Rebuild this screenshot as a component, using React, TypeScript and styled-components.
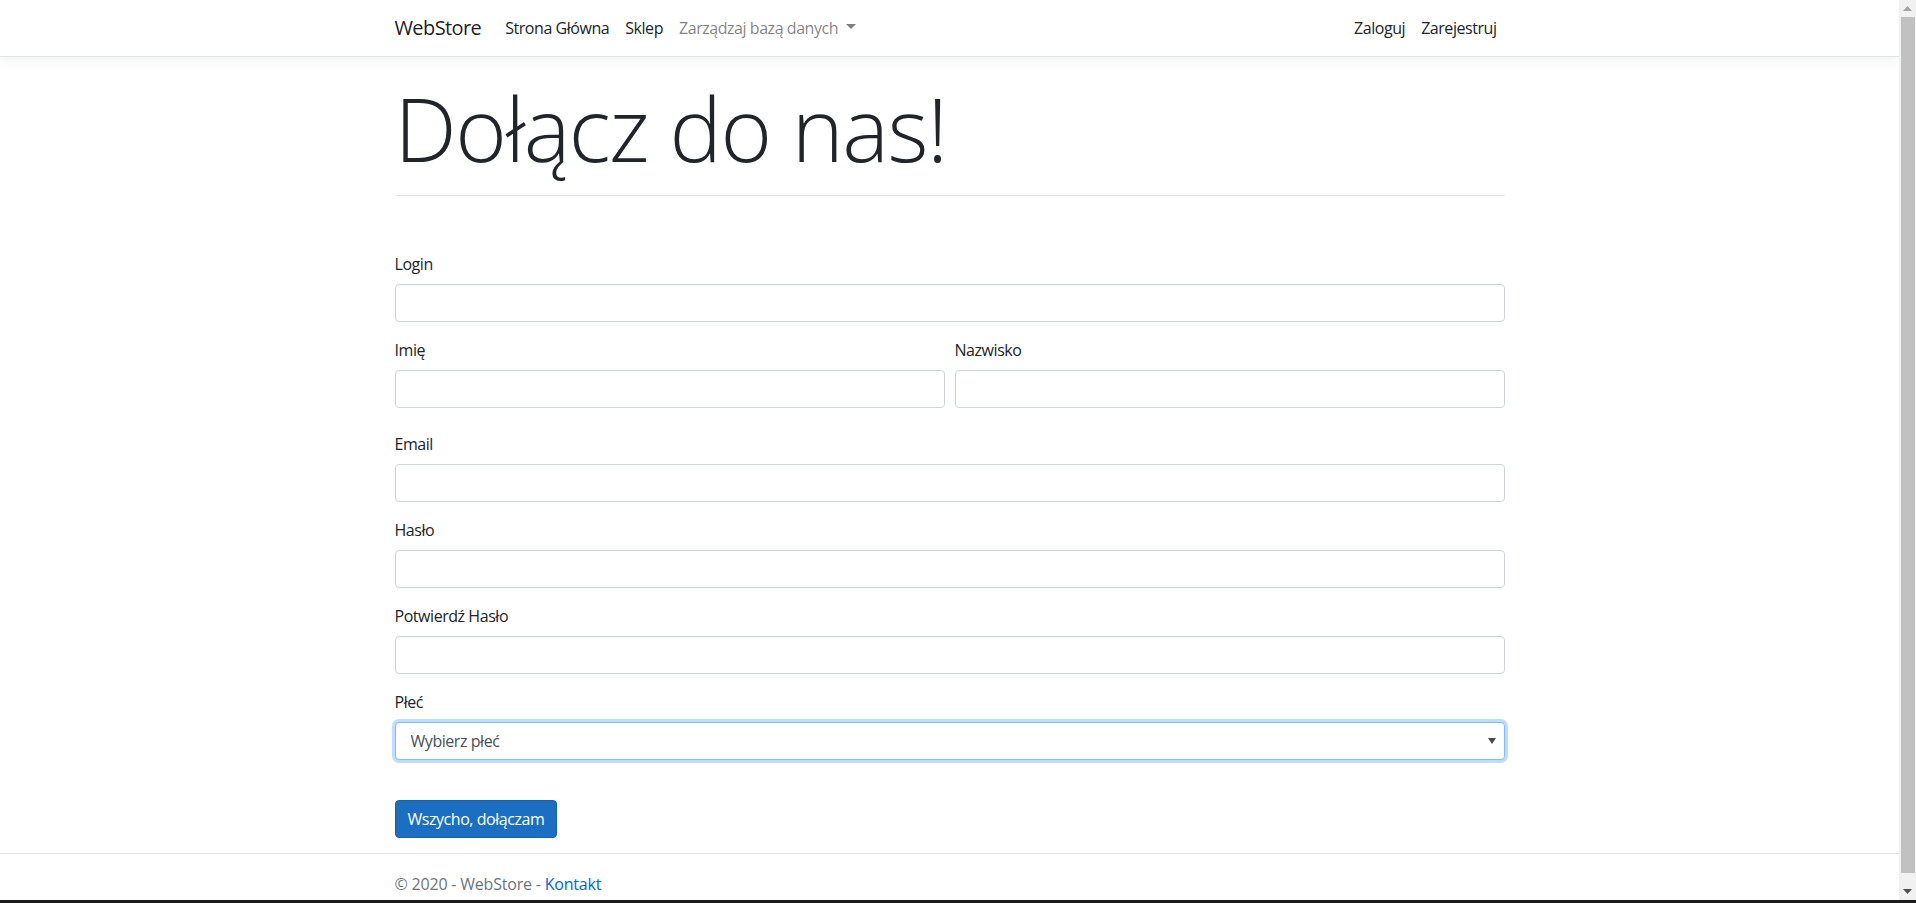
import React from "react";
import styled, { createGlobalStyle } from "styled-components";

const GlobalStyle = createGlobalStyle`
  html, body {
    margin: 0;
    padding: 0;
    overflow: hidden;
    background: #ffffff;
  }
  * {
    box-sizing: border-box;
  }
  body {
    font-family: "Segoe UI", "Open Sans", "Noto Sans", sans-serif;
    font-size: 16px;
    line-height: 1.5;
    letter-spacing: -0.45px;
    color: #212529;
  }
`;

type Field = { id: string; label: string; type?: string };

const topFields: Field[] = [{ id: "login", label: "Login" }];
const nameFields: Field[] = [
  { id: "imie", label: "Imię" },
  { id: "nazwisko", label: "Nazwisko" },
];
const bottomFields: Field[] = [
  { id: "email", label: "Email", type: "email" },
  { id: "haslo", label: "Hasło", type: "password" },
  { id: "potwierdz", label: "Potwierdź Hasło", type: "password" },
];

export default function App() {
  return (
    <Screen>
      <GlobalStyle />
      <Viewport>
        <Page>
          <Navbar>
            <NavContainer>
              <Brand href="#">WebStore</Brand>
              <NavList>
                <NavLink href="#">Strona Główna</NavLink>
                <NavLink href="#">Sklep</NavLink>
                <NavLink href="#" $muted>
                  Zarządzaj bazą danych
                  <Caret />
                </NavLink>
              </NavList>
              <NavListRight>
                <NavLink href="#">Zaloguj</NavLink>
                <NavLink href="#">Zarejestruj</NavLink>
              </NavListRight>
            </NavContainer>
          </Navbar>

          <Main>
            <Title>Dołącz do nas!</Title>
            <Divider />

            <form onSubmit={(e) => e.preventDefault()}>
              {topFields.map((f) => (
                <FormGroup key={f.id}>
                  <Label htmlFor={f.id}>{f.label}</Label>
                  <Input id={f.id} type={f.type ?? "text"} />
                </FormGroup>
              ))}

              <FormRow>
                {nameFields.map((f) => (
                  <FormGroup key={f.id}>
                    <Label htmlFor={f.id}>{f.label}</Label>
                    <Input id={f.id} type="text" />
                  </FormGroup>
                ))}
              </FormRow>

              {bottomFields.map((f) => (
                <FormGroup key={f.id}>
                  <Label htmlFor={f.id}>{f.label}</Label>
                  <Input id={f.id} type={f.type ?? "text"} />
                </FormGroup>
              ))}

              <FormGroup>
                <Label htmlFor="plec">Płeć</Label>
                <SelectBox>
                  <Select id="plec" defaultValue="">
                    <option value="">Wybierz płeć</option>
                    <option value="k">Kobieta</option>
                    <option value="m">Mężczyzna</option>
                  </Select>
                  <SelectArrow viewBox="0 0 8 6">
                    <path d="M0 0 H8 L4 6 Z" fill="#4a4a4a" />
                  </SelectArrow>
                </SelectBox>
              </FormGroup>

              <SubmitButton type="submit">Wszycho, dołączam</SubmitButton>
            </form>
          </Main>

          <Footer>
            <FooterInner>
              © 2020 - WebStore - <FooterLink href="#">Kontakt</FooterLink>
            </FooterInner>
          </Footer>
        </Page>

        <Scrollbar>
          <ScrollButton>
            <svg width="9" height="5" viewBox="0 0 9 5">
              <path d="M0 5 L4.5 0 L9 5 Z" fill="#a3a3a3" />
            </svg>
          </ScrollButton>
          <ScrollTrack>
            <ScrollThumb />
          </ScrollTrack>
          <ScrollButton>
            <svg width="9" height="5" viewBox="0 0 9 5">
              <path d="M0 0 L9 0 L4.5 5 Z" fill="#505050" />
            </svg>
          </ScrollButton>
        </Scrollbar>
      </Viewport>
      <BottomStrip />
    </Screen>
  );
}

// ✅ 화면 프레임
const Screen = styled.div`
  height: 903px;
  display: flex;
  flex-direction: column;
`;

const Viewport = styled.div`
  height: 900px;
  display: flex;
  flex-direction: row;
`;

const Page = styled.div`
  flex: 1;
  overflow: hidden;
  display: flex;
  flex-direction: column;
`;

const BottomStrip = styled.div`
  height: 3px;
  background: #1b1b1b;
`;

// 스크롤바
const Scrollbar = styled.div`
  width: 17px;
  background: #f1f1f1;
  display: flex;
  flex-direction: column;
`;

const ScrollButton = styled.div`
  height: 17px;
  display: flex;
  align-items: center;
  justify-content: center;
`;

const ScrollTrack = styled.div`
  flex: 1;
  padding: 0 1px 10px 2px;
  display: flex;
`;

const ScrollThumb = styled.div`
  flex: 1;
  background: #c1c1c1;
`;

// ✅ 네비게이션
const Navbar = styled.nav`
  height: 57px;
  flex-shrink: 0;
  background: #ffffff;
  border-bottom: 1px solid #e1e4e7;
  box-shadow: 0 4px 12px rgba(0, 0, 0, 0.05);
  position: relative;
  z-index: 1;
`;

const NavContainer = styled.div`
  width: 1140px;
  height: 100%;
  margin: 0 auto;
  padding: 0 15px;
  display: flex;
  flex-direction: row;
  align-items: center;
`;

const Brand = styled.a`
  font-size: 20px;
  line-height: 30px;
  letter-spacing: -0.6px;
  color: rgba(0, 0, 0, 0.9);
  text-decoration: none;
  margin-right: 16px;
`;

const NavList = styled.div`
  display: flex;
  flex-direction: row;
  flex: 1;
`;

const NavListRight = styled.div`
  display: flex;
  flex-direction: row;
`;

const NavLink = styled.a<{ $muted?: boolean }>`
  display: flex;
  align-items: center;
  padding: 8px;
  line-height: 24px;
  color: ${({ $muted }) => ($muted ? "rgba(0, 0, 0, 0.5)" : "#212529")};
  text-decoration: none;
`;

const Caret = styled.span`
  display: inline-block;
  margin-left: 8px;
  margin-top: -3px;
  border-top: 5px solid rgba(0, 0, 0, 0.5);
  border-left: 5px solid transparent;
  border-right: 5px solid transparent;
`;

// ✅ 본문
const Main = styled.main`
  width: 1140px;
  margin: 0 auto;
  padding: 19px 15px 0;
`;

const Title = styled.h1`
  margin: 0;
  font-family: "Segoe UI", "Open Sans", "Noto Sans", sans-serif;
  font-size: 88px;
  font-weight: 300;
  line-height: 1.2;
  letter-spacing: -1.5px;
  color: #212529;
`;

const Divider = styled.hr`
  margin: 13px 0 56px;
  border: 0;
  border-top: 1px solid rgba(0, 0, 0, 0.1);
`;

const FormGroup = styled.div`
  margin-bottom: 16px;
`;

const FormRow = styled.div`
  display: grid;
  grid-template-columns: 1fr 1fr;
  column-gap: 10px;
  margin-bottom: 8px;
`;

const Label = styled.label`
  display: block;
  margin-bottom: 8px;
  line-height: 24px;
  color: #212529;
`;

const Input = styled.input`
  display: block;
  width: 100%;
  height: 38px;
  padding: 6px 12px;
  font-family: inherit;
  font-size: 16px;
  color: #495057;
  background: #ffffff;
  border: 1px solid #ced4da;
  border-radius: 4px;
  outline: none;
`;

const SelectBox = styled.div`
  position: relative;
`;

const Select = styled.select`
  display: block;
  width: 100%;
  height: 38px;
  padding: 6px 12px 6px 15px;
  font-family: inherit;
  font-size: 16px;
  letter-spacing: -0.45px;
  color: #495057;
  background: #ffffff;
  border: 1px solid #80bdff;
  border-radius: 4px;
  box-shadow: 0 0 0 3px rgba(0, 123, 255, 0.25);
  appearance: none;
  outline: none;
`;

const SelectArrow = styled.svg`
  position: absolute;
  right: 9px;
  top: 16px;
  width: 8px;
  height: 6px;
  pointer-events: none;
`;

const SubmitButton = styled.button`
  margin-top: 24px;
  height: 38px;
  padding: 6px 12px;
  font-family: inherit;
  font-size: 16px;
  line-height: 24px;
  letter-spacing: -0.45px;
  color: #ffffff;
  background: #1b6ec2;
  border: 1px solid #1861ac;
  border-radius: 4px;
  cursor: pointer;
`;

// ✅ 푸터
const Footer = styled.footer`
  margin-top: 15px;
  flex-shrink: 0;
  border-top: 1px solid #e5e5e5;
  line-height: 60px;
  white-space: nowrap;
`;

const FooterInner = styled.div`
  width: 1140px;
  margin: 0 auto;
  padding: 0 15px;
  letter-spacing: -0.2px;
  color: #6c757d;
`;

const FooterLink = styled.a`
  color: #0366d6;
  text-decoration: none;
`;
